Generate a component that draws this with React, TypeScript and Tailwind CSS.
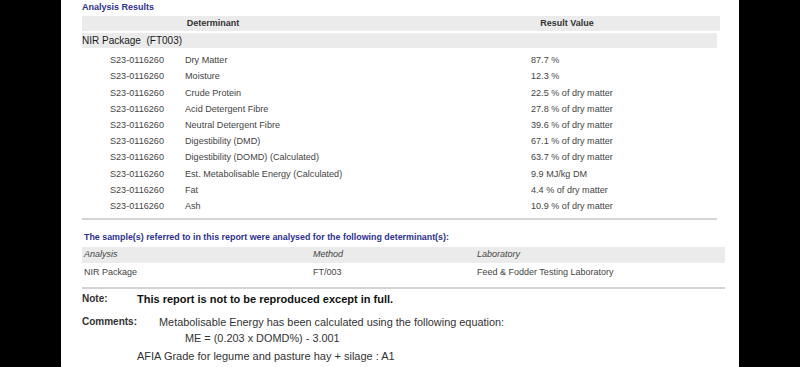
import React from "react";

type Result = {
  sample: string;
  determinant: string;
  value: string;
};

const results: Result[] = [
  { sample: "S23-0116260", determinant: "Dry Matter", value: "87.7 %" },
  { sample: "S23-0116260", determinant: "Moisture", value: "12.3 %" },
  { sample: "S23-0116260", determinant: "Crude Protein", value: "22.5 % of dry matter" },
  { sample: "S23-0116260", determinant: "Acid Detergent Fibre", value: "27.8 % of dry matter" },
  { sample: "S23-0116260", determinant: "Neutral Detergent Fibre", value: "39.6 % of dry matter" },
  { sample: "S23-0116260", determinant: "Digestibility (DMD)", value: "67.1 % of dry matter" },
  { sample: "S23-0116260", determinant: "Digestibility (DOMD) (Calculated)", value: "63.7 % of dry matter" },
  { sample: "S23-0116260", determinant: "Est. Metabolisable Energy (Calculated)", value: "9.9 MJ/kg DM" },
  { sample: "S23-0116260", determinant: "Fat", value: "4.4 % of dry matter" },
  { sample: "S23-0116260", determinant: "Ash", value: "10.9 % of dry matter" },
];

export default function App() {
  return (
    <div className="flex h-[367px] w-[800px] justify-center overflow-hidden bg-black font-['Liberation_Sans',Arial,sans-serif]">
      <div className="w-[678px] bg-white pl-[21px]">
        <h2 className="h-[16px] text-[9px] font-bold leading-[14px] text-[#2e3192]">Analysis Results</h2>

        <div className="flex h-[15px] w-[638px] items-center bg-[#ebebeb] text-[9px] font-bold text-[#333]">
          <div className="w-[262px] text-center">Determinant</div>
          <div className="w-[108px]" />
          <div className="w-[230px] text-center">Result Value</div>
        </div>

        <div className="mt-[2px] flex h-[15px] w-[635px] items-center bg-[#ebebeb] text-[10px] text-[#1a1a1a]">
          NIR Package&nbsp;&nbsp;(FT003)
        </div>

        <div className="mt-[5px]">
          {results.map((row) => (
            <div key={row.determinant} className="flex h-[16.2px] items-center text-[9.1px] text-[#444]">
              <div className="w-[28px]" />
              <div className="w-[75px]">{row.sample}</div>
              <div className="w-[346px]">{row.determinant}</div>
              <div>{row.value}</div>
            </div>
          ))}
        </div>

        <div className="mt-[3px] h-[2px] w-[635px] bg-[#d4d4d4]" />

        <p className="mt-[10px] h-[14px] pl-[2px] text-[8.9px] font-bold leading-[14px] text-[#2e3192]">
          The sample(s) referred to in this report were analysed for the following determinant(s):
        </p>

        <div className="mt-[3px] flex h-[16px] w-[643px] items-center bg-[#ebebeb] pl-[2px] text-[9px] italic text-[#444]">
          <div className="w-[229px]">Analysis</div>
          <div className="w-[164px]">Method</div>
          <div>Laboratory</div>
        </div>
        <div className="flex h-[19px] w-[643px] items-center pl-[2px] text-[9px] text-[#444]">
          <div className="w-[229px]">NIR Package</div>
          <div className="w-[164px]">FT/003</div>
          <div>Feed &amp; Fodder Testing Laboratory</div>
        </div>
        <div className="mt-[5px] h-[2px] w-[643px] bg-[#d4d4d4]" />

        <div className="mt-[1px] flex h-[18px] items-center">
          <div className="w-[55px] text-[10px] font-bold text-[#333]">Note:</div>
          <div className="text-[11px] font-bold text-[#111]">This report is not to be reproduced except in full.</div>
        </div>

        <div className="mt-[6px] flex h-[16px] items-center">
          <div className="w-[77px] text-[10px] font-bold text-[#333]">Comments:</div>
          <div className="text-[10.9px] text-[#333]">Metabolisable Energy has been calculated using the following equation:</div>
        </div>
        <div className="flex h-[16px] items-center pl-[103px] text-[10.9px] text-[#333]">ME = (0.203 x DOMD%) - 3.001</div>
        <div className="mt-[1px] flex h-[18px] items-center pl-[55px] text-[11px] text-[#333]">
          AFIA Grade for legume and pasture hay + silage : A1
        </div>
      </div>
    </div>
  );
}
